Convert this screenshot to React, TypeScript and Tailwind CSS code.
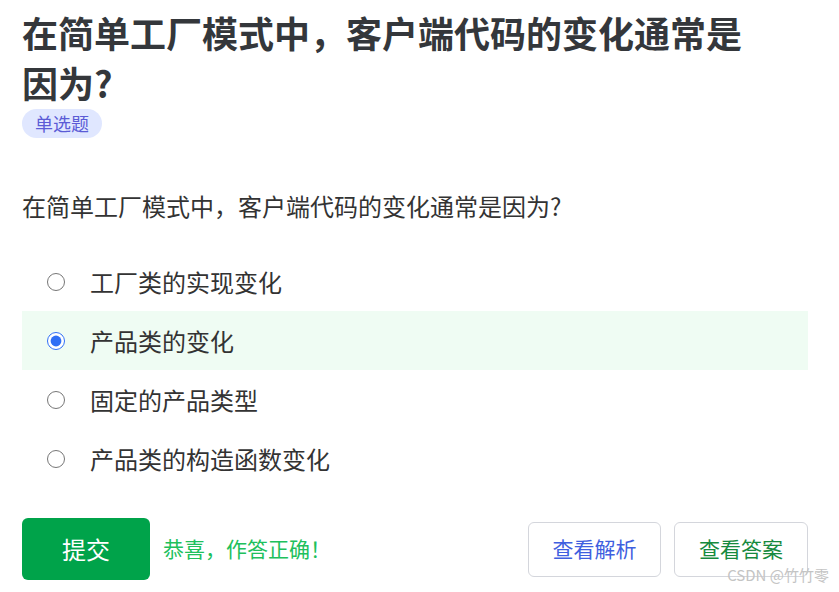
import { useState } from 'react';

const OPTIONS = ['工厂类的实现变化', '产品类的变化', '固定的产品类型', '产品类的构造函数变化'];

export default function App() {
  const [selected, setSelected] = useState(1);

  return (
    <div
      className="relative min-h-[592px] w-[839px] bg-white pl-[22px] pr-[31px] pt-[7px] text-[#333]"
      style={{ fontFamily: '"Noto Sans CJK SC", "Noto Sans", sans-serif' }}
    >
      {/* Title */}
      <h1 className="w-[740px] text-[36px] font-semibold leading-[50px] text-[#34373b]">
        在简单工厂模式中，客户端代码的变化通常是因为?
      </h1>
      <span className="mt-[2px] inline-flex h-[29px] items-center rounded-full bg-[#e0e7ff] px-[13px] text-[18px] text-[#5b5bd6]">
        单选题
      </span>

      {/* Question */}
      <p className="mt-[50px] text-[24px] leading-[36px] text-[#333]">
        在简单工厂模式中，客户端代码的变化通常是因为?
      </p>

      {/* Options */}
      <div className="mt-[28px] flex flex-col">
        {OPTIONS.map((opt, i) => (
          <label
            key={opt}
            className={`flex h-[59px] cursor-pointer items-center pl-[25px] ${
              selected === i ? 'bg-[#effcf3]' : ''
            }`}
          >
            <input
              type="radio"
              name="answer"
              checked={selected === i}
              onChange={() => setSelected(i)}
              className="m-0 h-[18px] w-[18px] accent-[#2f6ff5]"
            />
            <span className="ml-[25px] text-[24px] leading-[36px] text-[#333]">{opt}</span>
          </label>
        ))}
      </div>

      {/* Actions */}
      <div className="mt-[30px] flex items-center">
        <button className="h-[62px] w-[128px] rounded-[6px] bg-[#00a34a] text-[24px] text-white">
          提交
        </button>
        <span className="ml-[13px] text-[21px] text-[#20c05c]">恭喜，作答正确！</span>
        <div className="ml-auto flex gap-[13px]">
          <button className="h-[55px] w-[133px] rounded-[6px] border border-[#d4d6dc] bg-white text-[21px] text-[#3f5fe0]">
            查看解析
          </button>
          <button className="h-[55px] w-[134px] rounded-[6px] border border-[#d4d6dc] bg-white text-[21px] text-[#178a3e]">
            查看答案
          </button>
        </div>
      </div>

      {/* Watermark */}
      <span className="absolute right-[10px] top-[564px] text-[15px] text-[#c4c4c4]">
        CSDN @竹竹零
      </span>
    </div>
  );
}
